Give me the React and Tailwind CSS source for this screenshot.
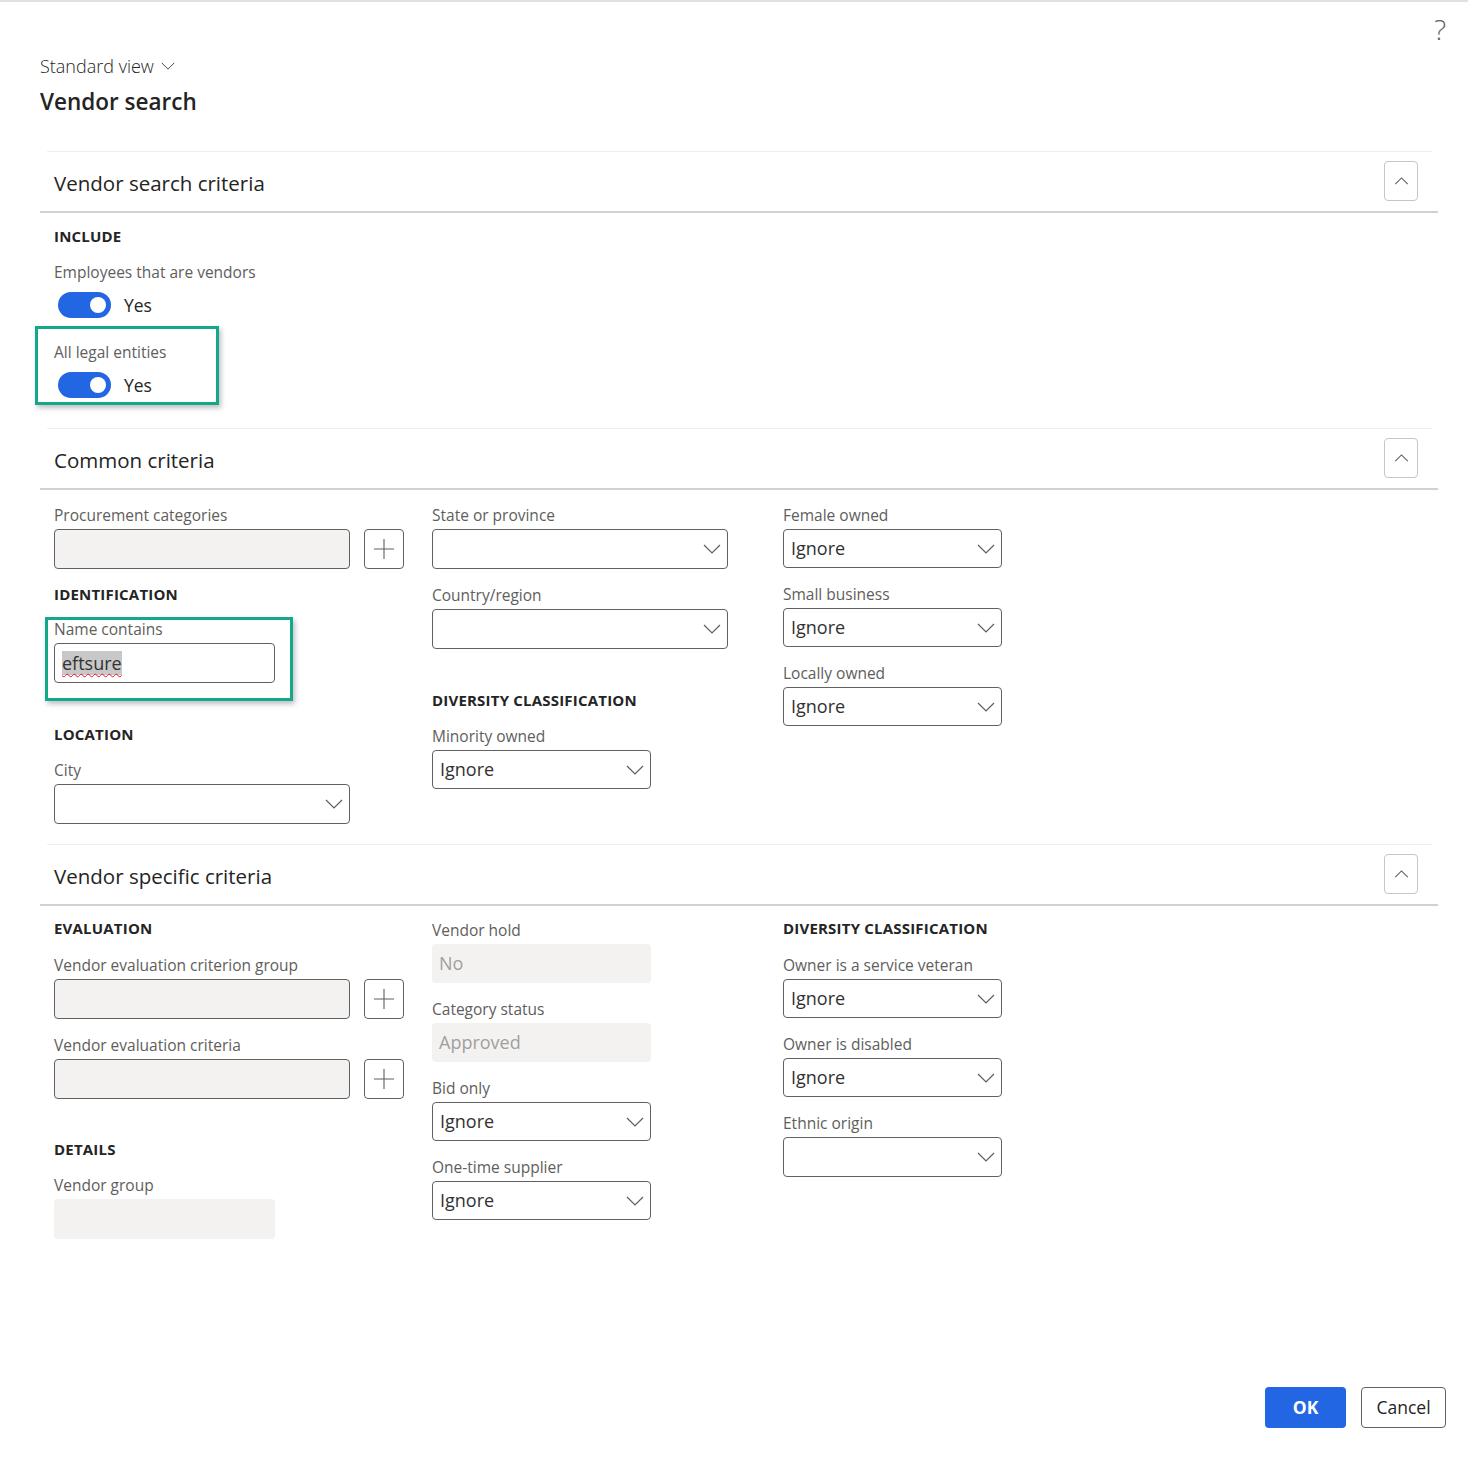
import React from 'react'

const font = { fontFamily: '"Open Sans", "Noto Sans", sans-serif' }

const Chevron = ({ className = '' }) => (
  <svg viewBox="0 0 18 10" className={className} fill="none" stroke="currentColor" strokeWidth="1.2">
    <path d="M1 1l8 8 8-8" />
  </svg>
)

const Label = ({ children, className = '' }) => (
  <div className={`h-5 leading-5 text-[15.5px] text-[#605e5c] whitespace-nowrap ${className}`}>{children}</div>
)

const Heading = ({ children, className = '' }) => (
  <div className={`h-5 leading-5 text-[15px] font-bold text-[#242424] tracking-[0.2px] whitespace-nowrap ${className}`}>{children}</div>
)

const Dropdown = ({ value, w = 'w-[219px]', h = 'h-[39px]' }) => (
  <div className={`${w} ${h} mt-1 rounded-[4px] border border-[#616161] bg-white flex items-center justify-between pl-[7px] pr-[6px]`}>
    <span className="text-[18px] text-[#323130]">{value}</span>
    <Chevron className="w-[18px] h-[10px] text-[#605e5c]" />
  </div>
)

const PlusButton = () => (
  <div className="w-[40px] h-[40px] rounded-[4px] border border-[#616161] flex items-center justify-center">
    <svg viewBox="0 0 20 20" className="w-[20px] h-[20px] text-[#605e5c]" fill="none" stroke="currentColor" strokeWidth="1.1">
      <path d="M10 0v20M0 10h20" />
    </svg>
  </div>
)

const LookupField = ({ label, className = '' }) => (
  <div className={className}>
    <Label>{label}</Label>
    <div className="mt-1 flex items-center gap-[14px]">
      <div className="w-[296px] h-[40px] rounded-[4px] border border-[#616161] bg-[#f3f2f1]" />
      <PlusButton />
    </div>
  </div>
)

const ReadOnly = ({ value, w = 'w-[219px]', h = 'h-[39px]' }) => (
  <div className={`${w} ${h} mt-1 rounded-[4px] bg-[#f3f2f1] flex items-center pl-[7px]`}>
    <span className="text-[18px] text-[#a19f9d]">{value}</span>
  </div>
)

const Toggle = () => (
  <div className="flex items-center mt-[10px] ml-1">
    <div className="w-[53px] h-[26px] rounded-full bg-[#2266e3] flex items-center justify-end pr-[5px]">
      <div className="w-[16px] h-[16px] rounded-full bg-white" />
    </div>
    <span className="ml-[13px] text-[17.5px] text-[#242424]">Yes</span>
  </div>
)

const SectionHeader = ({ title }) => (
  <div>
    <div className="ml-[7px] mr-[6px] border-t border-[#f0efee]" />
    <div className="h-[61px] flex items-center justify-between pl-[14px] pr-[20px] border-b-2 border-[#d1d1d1]">
      <h2 className="text-[20.5px] text-[#242424] mt-[4px]">{title}</h2>
      <div className="w-[34px] h-[40px] -mt-[2px] rounded-[4px] border border-[#c8c6c4] flex items-center justify-center">
        <svg viewBox="0 0 16 9" className="w-[15px] h-[8px] text-[#605e5c]" fill="none" stroke="currentColor" strokeWidth="1.2">
          <path d="M1 8l7-7 7 7" />
        </svg>
      </div>
    </div>
  </div>
)

const HighlightBox = ({ children, className = '' }) => (
  <div className={`border-[3px] border-[#13a88a] shadow-[2px_3px_5px_rgba(0,0,0,0.25)] ${className}`}>{children}</div>
)

export default function App() {
  return (
    <div style={font} className="w-[1468px] h-[1464px] bg-white flex flex-col border-t-2 border-[#e1e1e1] relative">
      <div className="absolute right-[22px] top-[6px] text-[28px] font-light text-[#616161]">?</div>

      <div className="pl-[40px] pt-[50px]">
        <div className="flex items-center text-[18px] font-light text-[#242424] h-[28px]">
          Standard view
          <Chevron className="w-[14px] h-[8px] ml-[7px] text-[#424242]" />
        </div>
        <h1 className="text-[22.5px] font-semibold text-[#242424] mt-[7px] leading-[30px]">Vendor search</h1>
      </div>

      <div className="mr-[30px] ml-[40px] mt-[34px]">
        {/* Vendor search criteria */}
        <SectionHeader title="Vendor search criteria" />
        <div className="pl-[14px] pt-[13px] h-[215px]">
          <Heading>INCLUDE</Heading>
          <Label className="mt-[16px]">Employees that are vendors</Label>
          <Toggle />
          <HighlightBox className="w-[184px] h-[79px] -ml-[19px] mt-[8px] pl-[16px] pt-[13px]">
            <Label>All legal entities</Label>
            <Toggle />
          </HighlightBox>
        </div>

        {/* Common criteria */}
        <SectionHeader title="Common criteria" />
        <div className="pl-[14px] pt-[15px] h-[354px] flex">
          <div className="w-[378px]">
            <LookupField label="Procurement categories" />
            <Heading className="mt-[15px]">IDENTIFICATION</Heading>
            <HighlightBox className="w-[248px] h-[84px] -ml-[9px] mt-[13px] pl-[6px]">
              <Label className="mt-[-1px]">Name contains</Label>
              <div className="w-[221px] h-[40px] mt-1 rounded-[4px] border border-[#616161] flex items-center pl-[7px]">
                <span className="text-[18px] leading-[24px] text-[#323130] bg-[#c8c8c8] underline decoration-wavy decoration-[#e81123] decoration-1 underline-offset-[3px]">eftsure</span>
              </div>
            </HighlightBox>
            <Heading className="mt-[23px]">LOCATION</Heading>
            <Label className="mt-[16px]">City</Label>
            <Dropdown value="" w="w-[296px]" h="h-[40px]" />
          </div>
          <div className="w-[351px]">
            <Label>State or province</Label>
            <Dropdown value="" w="w-[296px]" h="h-[40px]" />
            <Label className="mt-[16px]">Country/region</Label>
            <Dropdown value="" w="w-[296px]" h="h-[40px]" />
            <Heading className="mt-[41px]">DIVERSITY CLASSIFICATION</Heading>
            <Label className="mt-[16px]">Minority owned</Label>
            <Dropdown value="Ignore" />
          </div>
          <div>
            <Label>Female owned</Label>
            <Dropdown value="Ignore" />
            <Label className="mt-[16px]">Small business</Label>
            <Dropdown value="Ignore" />
            <Label className="mt-[16px]">Locally owned</Label>
            <Dropdown value="Ignore" />
          </div>
        </div>

        {/* Vendor specific criteria */}
        <SectionHeader title="Vendor specific criteria" />
        <div className="pl-[14px] pt-[12px] flex">
          <div className="w-[378px]">
            <Heading>EVALUATION</Heading>
            <LookupField label="Vendor evaluation criterion group" className="mt-[17px]" />
            <LookupField label="Vendor evaluation criteria" className="mt-[16px]" />
            <Heading className="mt-[40px]">DETAILS</Heading>
            <Label className="mt-[16px]">Vendor group</Label>
            <ReadOnly value="" w="w-[221px]" h="h-[40px]" />
          </div>
          <div className="w-[351px]">
            <Label className="mt-[2px]">Vendor hold</Label>
            <ReadOnly value="No" />
            <Label className="mt-[16px]">Category status</Label>
            <ReadOnly value="Approved" />
            <Label className="mt-[16px]">Bid only</Label>
            <Dropdown value="Ignore" />
            <Label className="mt-[16px]">One-time supplier</Label>
            <Dropdown value="Ignore" />
          </div>
          <div>
            <Heading>DIVERSITY CLASSIFICATION</Heading>
            <Label className="mt-[17px]">Owner is a service veteran</Label>
            <Dropdown value="Ignore" />
            <Label className="mt-[16px]">Owner is disabled</Label>
            <Dropdown value="Ignore" />
            <Label className="mt-[16px]">Ethnic origin</Label>
            <Dropdown value="" h="h-[40px]" />
          </div>
        </div>
      </div>

      <div className="mt-auto mb-[36px] mr-[22px] flex justify-end gap-[15px]">
        <button className="w-[81px] h-[41px] rounded-[4px] bg-[#2266e3] text-white text-[17.5px] font-bold">OK</button>
        <button className="w-[85px] h-[41px] rounded-[4px] border border-[#616161] bg-white text-[#242424] text-[17.5px]">Cancel</button>
      </div>
    </div>
  )
}
